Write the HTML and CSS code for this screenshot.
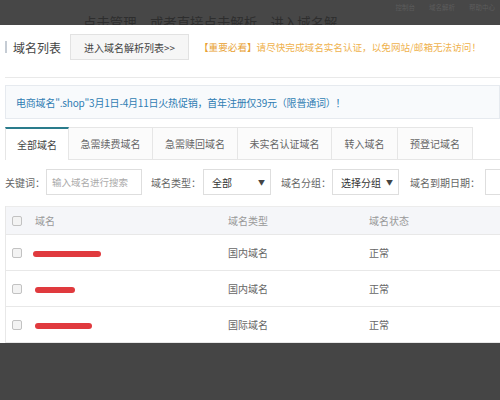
FILE: index.html
```html
<!DOCTYPE html>
<html lang="zh">
<head>
<meta charset="utf-8">
<link rel="stylesheet" href="styles.css">
</head>
<body>
<div class="topbar">
  <div class="tip">点击管理，或者直接点击解析，进入域名解</div>
  <div class="toplinks"><span>控制台</span><span>域名解析</span><span>帮助中心</span></div>
</div>
<div class="main">
  <div class="head">
    <span class="mark"></span>
    <span class="title">域名列表</span>
    <span class="btn">进入域名解析列表&gt;&gt;</span>
    <span class="warn"><b>【重要必看】</b>请尽快完成域名实名认证，以免网站/邮箱无法访问！</span>
  </div>
  <div class="rule"></div>
  <div class="notice">电商域名".shop"3月1日-4月11日火热促销，首年注册仅39元（限普通词）！</div>
  <div class="tabs">
    <span class="tab active t1">全部域名</span>
    <span class="tab t2">急需续费域名</span>
    <span class="tab t3">急需赎回域名</span>
    <span class="tab t4">未实名认证域名</span>
    <span class="tab t5">转入域名</span>
    <span class="tab t6">预登记域名</span>
    <span class="tabfill"></span>
  </div>
  <div class="filters">
    <span class="lbl">关键词：</span>
    <span class="input kw">输入域名进行搜索</span>
    <span class="lbl l2">域名类型：</span>
    <span class="select s1">全部<i>▼</i></span>
    <span class="lbl l3">域名分组：</span>
    <span class="select s2">选择分组<i>▼</i></span>
    <span class="lbl l4">域名到期日期：</span>
    <span class="input date"></span>
  </div>
  <div class="table">
    <div class="row thead">
      <span class="cb"></span><span>域名</span><span>域名类型</span><span>域名状态</span>
    </div>
    <div class="row">
      <span class="cb"></span><span><i class="scrib w1"></i></span><span>国内域名</span><span>正常</span>
    </div>
    <div class="row">
      <span class="cb"></span><span><i class="scrib w2"></i></span><span>国内域名</span><span>正常</span>
    </div>
    <div class="row">
      <span class="cb"></span><span><i class="scrib w3"></i></span><span>国际域名</span><span>正常</span>
    </div>
  </div>
</div>
<div class="bottombar"></div>
</body>
</html>
```
FILE: styles.css
```css
* { box-sizing: border-box; }
html, body { margin: 0; padding: 0; }
body {
  width: 500px; height: 400px; overflow: hidden; background: #fff;
  font-family: "Noto Sans CJK SC", "Noto Sans", sans-serif;
  font-size: 10px; color: #555;
}
.topbar {
  height: 25px; background: #474747; overflow: hidden;
  display: flex; justify-content: space-between;
}
.tip {
  padding: 14px 0 0 83px; font-size: 13.4px; line-height: 16px;
  color: #2e2e2e; white-space: nowrap;
}
.toplinks {
  display: flex; gap: 14px; padding: 3px 5px 0 0;
  font-size: 6.5px; line-height: 8px; color: #5c5c5c;
}
.main { height: 318px; padding-left: 5px; overflow: hidden; }
.head { display: flex; align-items: center; height: 26px; margin-top: 9px; }
.head > * { flex-shrink: 0; }
.mark { width: 2px; height: 12px; background: #c5ccd4; }
.title { font-size: 12px; color: #444; margin-left: 6px; }
.btn {
  margin-left: 9px; width: 119px; height: 26px; border: 1px solid #e2e2e2;
  background: #f6f6f6; color: #444; display: flex; align-items: center; justify-content: center;
}
.warn { margin-left: 10px; color: #efb24e; white-space: nowrap; font-size: 9.6px; }
.warn b { font-weight: normal; color: #e8a030; }
.rule { height: 1px; background: #e9e9e9; margin-top: 17px; }
.notice {
  margin-top: 7px; height: 34px; border: 1px solid #e6eaef; background: #f8fafc;
  color: #2f7db3; display: flex; align-items: center; padding-left: 10px; white-space: nowrap;
  letter-spacing: -0.2px;
}
.tabs { display: flex; margin-top: 8px; height: 33px; }
.tabs > * { flex-shrink: 0; }
.tab {
  display: flex; align-items: center; justify-content: center; white-space: nowrap;
  border: 1px solid #e6e6e6; border-left: none; background: #fbfbfb; color: #666;
}
.tab.t1 { border-left: 1px solid #e6e6e6; }
.tab.active { background: #fff; border-top: 2px solid #2a7c8c; border-bottom: none; color: #444; }
.t1 { width: 64px; } .t2 { width: 84px; } .t3 { width: 85px; }
.t4 { width: 94px; } .t5 { width: 66px; } .t6 { width: 75px; }
.tabfill { flex: 1 1 auto; flex-shrink: 1; border-bottom: 1px solid #e6e6e6; }
.filters { display: flex; align-items: center; margin-top: 9px; height: 26px; white-space: nowrap; }
.filters > * { flex-shrink: 0; }
.lbl { color: #666; }
.input {
  height: 26px; border: 1px solid #dedede; display: flex; align-items: center;
  padding-left: 5px; color: #aaa; font-size: 9.5px; overflow: hidden;
}
.kw { width: 96px; margin-left: 1px; }
.l2 { margin-left: 9px; }
.select {
  height: 26px; border: 1px solid #dedede; display: flex; align-items: center;
  justify-content: space-between; padding: 0 5px 0 8px; color: #333; margin-left: 2px;
}
.select i { font-style: normal; font-size: 7px; color: #444; }
.s1 { width: 68px; }
.l3 { margin-left: 10px; }
.s2 { width: 67px; margin-left: 1px; }
.l4 { margin-left: 11px; }
.date { width: 40px; margin-left: 5px; }
.table { margin-top: 11px; border-left: 1px solid #e8e8e8; }
.row {
  display: grid; grid-template-columns: 29px 193px 141px 1fr; align-items: center;
  height: 36px; border-bottom: 1px solid #e8e8e8; color: #666;
}
.row.thead { height: 29px; background: #f5f6f9; color: #999; border-top: 1px solid #ececec; }
.cb {
  width: 10px; height: 10px; margin-left: 6px; border: 1px solid #c2c2c2;
  border-radius: 2px; background: #f3f3f3;
}
.scrib { display: block; height: 6px; border-radius: 3px; background: #e03a3e; margin-top: 2px; }
.w1 { width: 68px; margin-left: -2px; } .w2 { width: 40px; } .w3 { width: 57px; }
.bottombar { height: 57px; background: #454545; }
```
